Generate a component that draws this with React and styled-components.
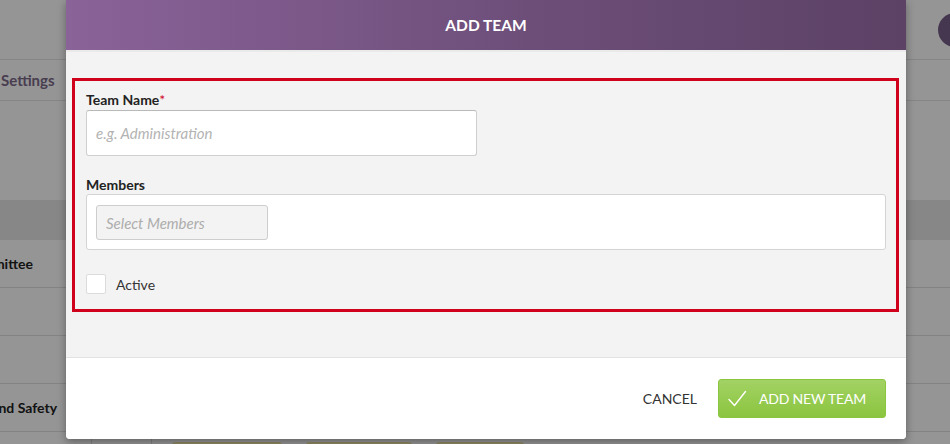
import React from "react";
import styled, { createGlobalStyle } from "styled-components";

const GlobalStyle = createGlobalStyle`
  html, body {
    margin: 0;
    padding: 0;
    font-family: Lato, "Open Sans", sans-serif;
    background: #fff;
  }
`;

const Screen = styled.div`
  position: relative;
  width: 950px;
  height: 444px;
  overflow: hidden;
  background: #fff;
`;

/* page behind the dialog */
const TopBar = styled.div`
  height: 59px;
  border-bottom: 1px solid #e4e4e4;
  display: flex;
  justify-content: flex-end;
  align-items: center;
`;

const Avatar = styled.div`
  width: 34px;
  height: 34px;
  border-radius: 50%;
  background: #765e87;
  margin-right: -22px;
`;

const Tabs = styled.div`
  height: 40px;
  border-bottom: 1px solid #e4e4e4;
  display: flex;
  align-items: center;
`;

const Tab = styled.span`
  margin-left: 1px;
  font-size: 15px;
  font-weight: 700;
  color: #7b6a8a;
`;

const Spacer = styled.div`
  height: 99px;
`;

const TableHead = styled.div`
  height: 40px;
  background: #e8e8e8;
`;

const Row = styled.div`
  height: 47px;
  border-bottom: 1px solid #e0e0e0;
  display: flex;
  align-items: center;
  font-size: 14px;
  font-weight: 700;
  color: #222;
`;

const RowName = styled.span`
  margin-left: -36px;
`;

const LastRow = styled.div`
  height: 40px;
  display: flex;
`;

const Cell = styled.div`
  width: ${(p) => p.w}px;
  border-right: 1px solid #ddd;
  flex-shrink: 0;
`;

const Tags = styled.div`
  display: flex;
  gap: 24px;
  padding: 10px 0 0 20px;
`;

const Tag = styled.div`
  width: ${(p) => p.w}px;
  height: 20px;
  border-radius: 3px;
  background: #f3e9a6;
`;

const Overlay = styled.div`
  position: absolute;
  inset: 0;
  background: rgba(0, 0, 0, 0.415);
  padding-left: 66px;
`;

/* dialog */
const Modal = styled.div`
  width: 840px;
  background: #f3f3f3;
  border-radius: 0 0 4px 4px;
  box-shadow: 0 3px 8px rgba(0, 0, 0, 0.35);
  overflow: hidden;
`;

const Header = styled.div`
  height: 50px;
  background: linear-gradient(90deg, #8a6399 0%, #6d4e79 55%, #5c4265 100%);
  color: #fff;
  font-size: 15.5px;
  font-weight: 700;
  display: flex;
  align-items: center;
  justify-content: center;
  border-bottom: 2px solid #eaeaea;
`;

const Body = styled.div`
  height: 306px;
  padding: 26px 7px 0 6px;
  box-sizing: border-box;
  border-bottom: 1px solid #e2e2e2;
`;

const Highlight = styled.div`
  border: 3px solid #d0021b;
  padding: 10px 10px 15px 11px;
`;

const Label = styled.label`
  display: block;
  font-size: 14px;
  font-weight: 700;
  line-height: 18px;
  color: #222;
  margin-top: ${(p) => p.mt || 0}px;
`;

const Required = styled.span`
  color: #d0021b;
  font-weight: 400;
`;

const TextInput = styled.input`
  display: block;
  box-sizing: border-box;
  width: 391px;
  height: 46px;
  margin-top: 1px;
  padding: 0 9px;
  background: #fff;
  border: 1px solid #cfcfcf;
  border-top-color: #b9b9b9;
  border-radius: 3px;
  font-family: Lato, sans-serif;
  font-size: 15px;
  outline: none;

  &::placeholder {
    color: #b3b3b3;
    font-style: italic;
  }
`;

const MultiSelect = styled.div`
  box-sizing: border-box;
  height: 56px;
  background: #fff;
  border: 1px solid #d4d4d4;
  border-radius: 3px;
  padding: 10px 9px;
`;

const SelectChip = styled.div`
  box-sizing: border-box;
  width: 172px;
  height: 35px;
  background: #f3f3f3;
  border: 1px solid #cdcdcd;
  border-radius: 3px;
  display: flex;
  align-items: center;
  padding-left: 9px;
  font-size: 15px;
  font-style: italic;
  color: #adadad;
`;

const CheckRow = styled.label`
  display: flex;
  align-items: center;
  gap: 10px;
  margin-top: 24px;
  font-size: 14px;
  color: #333;
`;

const Box = styled.span`
  box-sizing: border-box;
  width: 20px;
  height: 20px;
  background: #fff;
  border: 1px solid #dcdcdc;
  border-radius: 2px;
`;

const Footer = styled.div`
  height: 81px;
  background: #fff;
  display: flex;
  align-items: center;
  justify-content: flex-end;
  padding-right: 20px;
  gap: 21px;
`;

const TextButton = styled.button`
  border: none;
  background: none;
  padding: 0;
  font-family: Lato, sans-serif;
  font-size: 14px;
  color: #333;
  text-transform: uppercase;
`;

const PrimaryButton = styled.button`
  box-sizing: border-box;
  width: 168px;
  height: 39px;
  border: 1px solid #8cc640;
  border-radius: 3px;
  background: linear-gradient(180deg, #a2d264 0%, #8bc53f 100%);
  color: #fff;
  font-family: Lato, sans-serif;
  font-size: 14px;
  display: flex;
  align-items: center;
  gap: 12px;
  padding: 0 0 0 9px;
  text-transform: uppercase;
  letter-spacing: -0.2px;
`;

function CheckIcon() {
  return (
    <svg width="19" height="17" viewBox="0 0 19 17" fill="none">
      <path d="M1 9.5 L6.5 15.5 L17.5 1.5" stroke="#fff" strokeWidth="1.4" strokeLinecap="round" strokeLinejoin="round" />
    </svg>
  );
}

export default function App() {
  return (
    <>
      <GlobalStyle />
      <Screen>
        <TopBar>
          <Avatar />
        </TopBar>
        <Tabs>
          <Tab>Settings</Tab>
        </Tabs>
        <Spacer />
        <TableHead />
        <Row><RowName>Committee</RowName></Row>
        <Row />
        <Row />
        <Row><RowName>Fire and Safety</RowName></Row>
        <LastRow>
          <Cell w={91} />
          <Cell w={59} />
          <Tags>
            <Tag w={110} />
            <Tag w={106} />
            <Tag w={88} />
          </Tags>
        </LastRow>

        <Overlay>
          <Modal>
            <Header>ADD TEAM</Header>
            <Body>
              <Highlight>
                <Label>
                  Team Name<Required>*</Required>
                </Label>
                <TextInput placeholder="e.g. Administration" />
                <Label mt={20}>Members</Label>
                <MultiSelect>
                  <SelectChip>Select Members</SelectChip>
                </MultiSelect>
                <CheckRow>
                  <Box />
                  Active
                </CheckRow>
              </Highlight>
            </Body>
            <Footer>
              <TextButton>Cancel</TextButton>
              <PrimaryButton>
                <CheckIcon />
                Add new team
              </PrimaryButton>
            </Footer>
          </Modal>
        </Overlay>
      </Screen>
    </>
  );
}
